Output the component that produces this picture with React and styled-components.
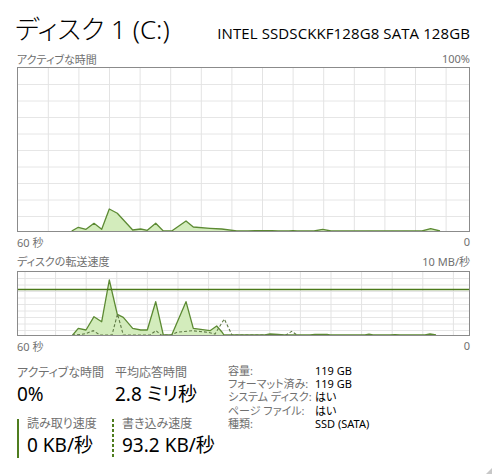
import React from "react";
import styled, { createGlobalStyle } from "styled-components";

const GlobalStyle = createGlobalStyle`
  html, body { margin: 0; padding: 0; background: #ffffff; }
  body {
    font-family: "Noto Sans", "Noto Sans CJK JP", sans-serif;
    font-feature-settings: "palt" 1;
    color: #000;
  }
`;

const JP = `"Noto Sans", "Noto Sans CJK JP", sans-serif`;

const Page = styled.div`
  width: 453px;
  padding: 0 23px 0 17px;
  display: flex;
  flex-direction: column;
`;

const Header = styled.div`
  display: flex;
  justify-content: space-between;
  align-items: baseline;
  height: 50px;
  padding-top: 13px;
  box-sizing: border-box;
`;

const Title = styled.h1`
  margin: 0 0 0 -2px;
  font-family: ${JP};
  font-weight: 300;
  font-size: 26px;
  line-height: 32px;
  color: #000;
  font-feature-settings: "palt" 1;
`;

const Model = styled.div`
  font-family: "Open Sans", sans-serif;
  font-size: 15px;
  color: #000;
  letter-spacing: 0.1px;
`;

const AxisRow = styled.div`
  display: flex;
  justify-content: space-between;
  align-items: center;
  height: ${(p) => p.$h}px;
  font-family: ${JP};
  font-size: 11px;
  color: #707070;
  font-feature-settings: "palt" 1;
`;

const GraphBox = styled.div`
  height: ${(p) => p.$h}px;
  border: 1px solid #8b8b8b;
  box-sizing: border-box;
  background: #fff;
  display: flex;
  svg { display: block; flex: 1; }
`;

const Stats = styled.div`
  display: grid;
  grid-template-columns: 95px 114px 1fr;
  align-items: start;
  padding-top: 9px;
`;

const StatCol = styled.div`
  display: flex;
  flex-direction: column;
  padding-left: ${(p) => p.$pl || 0}px;
`;

const StatLabel = styled.div`
  font-family: ${JP};
  font-size: 12px;
  line-height: 17px;
  color: #707070;
  white-space: nowrap;
  font-feature-settings: "palt" 1;
`;

const StatValue = styled.div`
  font-family: ${JP};
  font-size: 19px;
  line-height: 26px;
  color: #000;
  white-space: nowrap;
  font-feature-settings: "palt" 1;
`;

const RateBlock = styled.div`
  display: flex;
  margin-top: 8px;
  margin-left: ${(p) => p.$ml || 0}px;
  gap: 8px;
`;

const RateBar = styled.div`
  width: 2px;
  height: 39px;
  align-self: flex-end;
  background: ${(p) =>
    p.$dashed
      ? "repeating-linear-gradient(to bottom, #4f7d1f 0 3px, transparent 3px 5px)"
      : "#4f7d1f"};
`;

const RateText = styled.div`
  display: flex;
  flex-direction: column;
`;

const InfoTable = styled.div`
  display: grid;
  grid-template-columns: 87px 1fr;
  grid-auto-rows: 13.2px;
  padding-top: 0;
  padding-left: 2px;
  font-family: ${JP};
  font-size: 11px;
  line-height: 13px;
  align-items: center;
  font-feature-settings: "palt" 1;
`;

const InfoKey = styled.div`
  color: #707070;
  white-space: nowrap;
`;

const InfoVal = styled.div`
  color: #000;
  white-space: nowrap;
`;

const Grip = styled.svg`
  position: fixed;
  right: 1px;
  bottom: 2px;
`;

const g1 = [
  [71.7, 232], [78.3, 227.3], [86, 229.3], [94, 223.3], [101.7, 229.3], [109.3, 209],
  [117.3, 213.3], [132.7, 230], [140.7, 229], [147.3, 230.3], [155.7, 223.3], [163.3, 231.7],
  [171.7, 232], [186, 221], [193.3, 227], [210, 228.3], [221.7, 229], [236.7, 231.3],
  [248, 231.4], [255, 230.7], [272, 230.7], [278, 232], [289, 232], [293, 230.6], [297, 232],
  [314, 232], [322.7, 229.4], [331, 232], [365, 232], [370, 230.8], [375, 232], [388, 232],
  [392, 230.8], [400, 231.3], [405, 230.8], [410, 232], [422, 232], [430.7, 228.6], [440, 232],
];

const g2solid = [
  [72.7, 336], [78.3, 328.3], [86, 330], [94, 316.7], [101.7, 321.7], [109.3, 280],
  [117.3, 314.3], [123.3, 317.3], [132.7, 328.3], [140.7, 330], [147.3, 330], [155.7, 301.7],
  [163.3, 336], [171.7, 336], [186, 301.7], [193.3, 328.3], [210, 330.7], [216.7, 326],
  [221.7, 331.7], [224, 336], [265, 336], [270, 334], [278, 334.4], [284, 336], [310, 336],
  [315, 334.4], [327, 334.4], [330, 336], [365, 336], [369, 334.2], [373, 336], [390, 336],
  [395, 334.6], [400, 336], [425, 336], [430, 334], [436, 336],
];

const g2dash = [
  [72, 336], [80, 334.5], [86, 333.5], [93.3, 330.7], [100, 336], [112, 336], [117.5, 314],
  [123.3, 336], [150, 336], [156, 330.5], [161, 336], [171, 336], [177, 332.3], [192, 330.7],
  [208, 332.3], [215, 334], [224.3, 319], [232, 336], [286, 336], [291.7, 331.3], [297, 336],
];

function toPts(arr, ox, oy, maxY) {
  return arr.map(([x, y]) => `${(x - ox).toFixed(1)},${(Math.min(y, maxY) - oy).toFixed(1)}`).join(" ");
}

function Chart({ w, h, ox, oy, vStart, hStep, data, dash, refLine }) {
  const vLines = [];
  for (let x = vStart; x < ox + w; x += 30.6) vLines.push(x - ox);
  const hLines = [];
  for (let k = 1; k < 10; k++) hLines.push(k * hStep);
  const maxY = oy + h;
  const fillPts =
    `${(data[0][0] - ox).toFixed(1)},${h} ` + toPts(data, ox, oy, maxY) + ` ${(data[data.length - 1][0] - ox).toFixed(1)},${h}`;
  return (
    <svg viewBox={`0 0 ${w} ${h}`} width={w} height={h} preserveAspectRatio="none">
      {hLines.map((y, i) => (
        <line key={"h" + i} x1="0" x2={w} y1={y} y2={y} stroke="#e6e6e6" strokeWidth="1" />
      ))}
      {vLines.map((x, i) => (
        <line key={"v" + i} x1={x} x2={x} y1="0" y2={h} stroke="#e3e3e3" strokeWidth="1" />
      ))}
      <polygon points={fillPts} fill="#d3ecbc" />
      <polyline points={toPts(data, ox, oy, maxY)} fill="none" stroke="#5c8a33" strokeWidth="1.3" strokeLinejoin="round" />
      {dash && (
        <polyline points={toPts(dash, ox, oy, maxY)} fill="none" stroke="#5f7a45" strokeWidth="1.1" strokeDasharray="3 2" />
      )}
      {refLine && <line x1="0" x2={w} y1={refLine - oy} y2={refLine - oy} stroke="#4b7a1a" strokeWidth="1.3" />}
    </svg>
  );
}

export default function App() {
  return (
    <>
      <GlobalStyle />
      <Page>
        <Header>
          <Title>ディスク 1 (C:)</Title>
          <Model>INTEL SSDSCKKF128G8 SATA 128GB</Model>
        </Header>
        <AxisRow $h={17}>
          <span>アクティブな時間</span>
          <span>100%</span>
        </AxisRow>
        <GraphBox $h={165}>
          <Chart w={451} h={163} ox={18} oy={68} vStart={48.3} hStep={16.5} data={g1} />
        </GraphBox>
        <AxisRow $h={19}>
          <span>60 秒</span>
          <span>0</span>
        </AxisRow>
        <AxisRow $h={20}>
          <span>ディスクの転送速度</span>
          <span>10 MB/秒</span>
        </AxisRow>
        <GraphBox $h={65}>
          <Chart w={451} h={63} ox={18} oy={272} vStart={25} hStep={6.5} data={g2solid} dash={g2dash} refLine={289.5} />
        </GraphBox>
        <AxisRow $h={19}>
          <span>60 秒</span>
          <span>0</span>
        </AxisRow>
        <Stats>
          <StatCol>
            <StatLabel>アクティブな時間</StatLabel>
            <StatValue>0%</StatValue>
            <RateBlock>
              <RateBar />
              <RateText>
                <StatLabel>読み取り速度</StatLabel>
                <StatValue>0 KB/秒</StatValue>
              </RateText>
            </RateBlock>
          </StatCol>
          <StatCol $pl={3}>
            <StatLabel>平均応答時間</StatLabel>
            <StatValue>2.8 ミリ秒</StatValue>
            <RateBlock $ml={-3}>
              <RateBar $dashed />
              <RateText>
                <StatLabel>書き込み速度</StatLabel>
                <StatValue>93.2 KB/秒</StatValue>
              </RateText>
            </RateBlock>
          </StatCol>
          <InfoTable>
            <InfoKey>容量:</InfoKey>
            <InfoVal>119 GB</InfoVal>
            <InfoKey>フォーマット済み:</InfoKey>
            <InfoVal>119 GB</InfoVal>
            <InfoKey>システム ディスク:</InfoKey>
            <InfoVal>はい</InfoVal>
            <InfoKey>ページ ファイル:</InfoKey>
            <InfoVal>はい</InfoVal>
            <InfoKey>種類:</InfoKey>
            <InfoVal>SSD (SATA)</InfoVal>
          </InfoTable>
        </Stats>
      </Page>
      <Grip width="6" height="6" viewBox="0 0 6 6">
        <path d="M6 0 L6 6 L0 6 Z" fill="#c8c8c8" />
      </Grip>
    </>
  );
}
